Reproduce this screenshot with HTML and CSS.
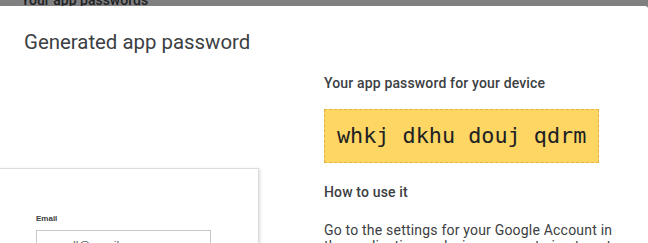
FILE: index.html
```html
<!DOCTYPE html>
<html lang="en">
<head>
<meta charset="utf-8">
<title>Generated app password</title>
<link rel="stylesheet" href="styles.css">
</head>
<body>
<div class="backdrop-title"><span>Your app passwords</span></div>
<div class="dialog">
  <h2 class="dialog-title">Generated app password</h2>
  <div class="dialog-body">
    <div class="illustration">
      <div class="login-card">
        <div class="field-label">Email</div>
        <div class="field-input">ll@gmail.com</div>
      </div>
    </div>
    <div class="details">
      <div class="section-label">Your app password for your device</div>
      <div class="password-box">whkj dkhu douj qdrm</div>
      <div class="section-label how">How to use it</div>
      <p class="instructions">Go to the settings for your Google Account in the application or device you are trying to set up. Replace your password with the 16-character password shown above.</p>
    </div>
  </div>
</div>
</body>
</html>
```
FILE: styles.css
```css
html, body {
  margin: 0;
  padding: 0;
}
body {
  background: #808080;
  font-family: Roboto, "Liberation Sans", Arial, sans-serif;
  color: #3c4043;
  height: 243px;
  overflow: hidden;
}
.backdrop-title {
  height: 6px;
  overflow: hidden;
  padding-left: 21px;
}
.backdrop-title span {
  display: block;
  margin-top: -10px;
  font-size: 14px;
  font-weight: 500;
  line-height: 20px;
  color: #202124;
}
.dialog {
  background: #fff;
  border-radius: 0 3px 0 0;
  height: 237px;
  overflow: hidden;
}
.dialog-title {
  margin: 0;
  padding: 22px 24px 0;
  font-size: 20.4px;
  line-height: 28px;
  font-weight: 400;
  color: #3c4043;
}
.dialog-body {
  display: grid;
  grid-template-columns: 324px 1fr;
}
.illustration {
  padding-top: 112px;
}
.login-card {
  margin-left: -20px;
  width: 279px;
  height: 120px;
  border: 1px solid #dadce0;
  box-shadow: 1px 1px 3px rgba(0,0,0,0.15);
  padding: 45px 0 0 55px;
  box-sizing: border-box;
  background: #fff;
}
.field-label {
  font-size: 8px;
  font-weight: 700;
  line-height: 10px;
  color: #3c4043;
  font-family: "Liberation Sans", Arial, sans-serif;
}
.field-input {
  margin-top: 6px;
  width: 175px;
  height: 36px;
  border: 1px solid #c8c8c8;
  box-sizing: border-box;
  font-family: "Liberation Sans", Arial, sans-serif;
  font-size: 12px;
  line-height: 20px;
  padding: 5px 0 0 36px;
  color: #5f6368;
}
.details {
  padding-top: 17px;
  padding-right: 24px;
}
.section-label {
  font-size: 14px;
  font-weight: 500;
  line-height: 20px;
  letter-spacing: 0.15px;
  color: #3c4043;
}
.password-box {
  display: inline-block;
  margin-top: 16px;
  padding: 0 12px;
  height: 54px;
  line-height: 52px;
  box-sizing: border-box;
  background: #fdd663;
  border: 1px dashed #e2b23d;
  font-family: "DejaVu Sans Mono", "Liberation Mono", monospace;
  font-size: 21.8px;
  color: #202124;
}
.how {
  margin-top: 19px;
}
.instructions {
  margin: 20px 0 0;
  font-size: 14px;
  line-height: 16px;
  letter-spacing: 0.2px;
  color: #3c4043;
}
```
